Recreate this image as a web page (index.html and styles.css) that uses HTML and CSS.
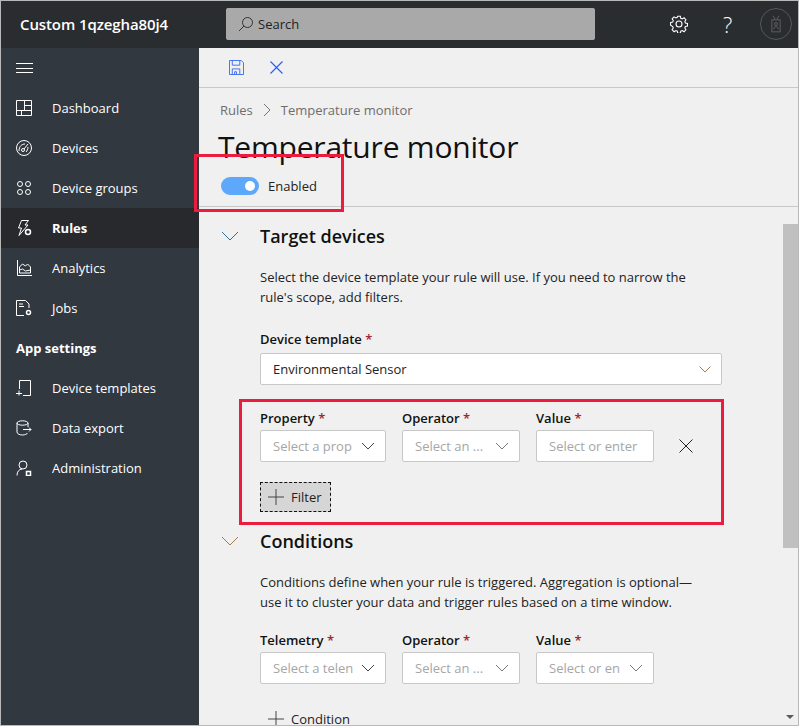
FILE: index.html
```html
<!DOCTYPE html>
<html lang="en">
<head>
    <meta charset="UTF-8">
    <title>Temperature monitor</title>
    <link rel="stylesheet" href="styles.css">
</head>
<body>
<div class="app">
    <header class="topbar">
        <div class="brand">Custom 1qzegha80j4</div>
        <div class="search">
            <svg class="search-icon" width="16" height="16" viewBox="0 0 16 16" fill="none" stroke="#333" stroke-width="1"><circle cx="9.500" cy="6.500" r="5"/><path d="M6 10 1 15"/></svg>
            <span>Search</span>
        </div>
        <div class="top-icons">
            <svg width="18" height="18" viewBox="0 0 18 18" fill="none" stroke="#fff" stroke-width="1.1"><path d="M7.600 1h2.800l.4 2.200 1.500.7 1.900-1.200 2 2-1.200 1.900.6 1.500 2.200.5v2.800l-2.200.4-.6 1.500 1.200 1.900-2 2-1.900-1.200-1.500.6-.4 2.200H7.600l-.4-2.200-1.500-.6-1.900 1.200-2-2 1.200-1.900-.6-1.500L.2 10.400V7.600l2.200-.5.6-1.500-1.200-1.900 2-2 1.900 1.200 1.500-.7z" transform="translate(.4 .2) scale(.96)"/><circle cx="9" cy="9" r="3"/></svg>
            <span class="help">?</span>
            <div class="avatar">
                <svg width="14" height="24" viewBox="0 0 14 24" fill="none" stroke="#6b6e71" stroke-width="1"><path d="M3 1l3 5M11 1 8 6"/><rect x="1.500" y="6.500" width="11" height="16"/><circle cx="7" cy="12" r="2"/><path d="M4 19c0-5 6-5 6 0"/></svg>
            </div>
        </div>
    </header>

    <div class="layout">
        <nav class="sidebar">
            <div class="nav-row">
                <svg class="nav-icon" width="17" height="16" viewBox="0 0 17 16" stroke="#fff" fill="none"><path d="M0 3.500h17M0 8.500h17M0 12.500h17"/></svg>
            </div>
            <a class="nav-row">
                <svg class="nav-icon" width="16" height="16" viewBox="0 0 16 16" stroke="#fff" fill="none"><path d="M.5.500h15v15H.5zM8.500.500v10M8.500 5.500h7M.5 10.500h15M5.500 10.500v5"/></svg>
                Dashboard
            </a>
            <a class="nav-row">
                <svg class="nav-icon" width="16" height="16" viewBox="0 0 16 16" stroke="#fff" fill="none"><circle cx="8" cy="8" r="7.500"/><circle cx="7" cy="10" r="1.500"/><path d="M3 11C3 6 6 4 9 4M8 9l4-5M12 7c0 2-1 4-2 5"/></svg>
                Devices
            </a>
            <a class="nav-row">
                <svg class="nav-icon" width="16" height="16" viewBox="0 0 16 16" stroke="#fff" fill="none"><circle cx="4" cy="4" r="2.500"/><circle cx="12" cy="4" r="2.500"/><circle cx="4" cy="12" r="2.500"/><circle cx="12" cy="12" r="2.500"/></svg>
                Device groups
            </a>
            <a class="nav-row active">
                <svg class="nav-icon" width="16" height="16" viewBox="0 0 16 16" stroke="#fff" fill="none"><path d="M5.500.500h7L9 5h3l-9 10.500L5.500 8H2.500z"/><circle cx="12" cy="12" r="2.500" stroke-width="1.500"/></svg>
                Rules
            </a>
            <a class="nav-row">
                <svg class="nav-icon" width="16" height="16" viewBox="0 0 16 16" stroke="#fff" fill="none"><path d="M1.500 0v15.500H16M3.500 7l3-3 3 2 2-2 3 3v6h-11zM3.500 10l3-1 3 2 5-1"/></svg>
                Analytics
            </a>
            <a class="nav-row">
                <svg class="nav-icon" width="16" height="16" viewBox="0 0 16 16" stroke="#fff" fill="none"><path d="M8 15.500H.5V.500h9l3.500 3.500v4M3 4h4M3 6.500h5"/><circle cx="12.500" cy="12.500" r="2" stroke-width="1.500"/></svg>
                Jobs
            </a>
            <div class="nav-row nav-title">App settings</div>
            <a class="nav-row">
                <svg class="nav-icon" width="16" height="16" viewBox="0 0 16 16" stroke="#fff" fill="none"><path d="M3.500 9V.500h11V15.500H7M0 13.500h6M3 10.500v5"/></svg>
                Device templates
            </a>
            <a class="nav-row">
                <svg class="nav-icon" width="16" height="16" viewBox="0 0 16 16" stroke="#fff" fill="none"><ellipse cx="6.500" cy="3" rx="5.500" ry="2.200"/><path d="M1 3v9c0 2 3 3 5.500 3s4.500-1 5-2M12 3v4M7 9.500h8M13 7.500l2 2-2 2"/></svg>
                Data export
            </a>
            <a class="nav-row">
                <svg class="nav-icon" width="16" height="16" viewBox="0 0 16 16" stroke="#fff" fill="none"><circle cx="7" cy="5" r="4"/><path d="M1 15.500c0-4 2-6 5-6.500"/><rect x="10.500" y="11.500" width="4" height="4" stroke-width="1.500"/></svg>
                Administration
            </a>
        </nav>

        <main class="main">
            <div class="toolbar">
                <svg width="15" height="15" viewBox="0 0 16 16" fill="none" stroke="#3a6cf0"><path d="M.5.500h12.500l2.500 2.500v12.500H.5zM3.500.500v5h8v-5M3.500 15.500v-6h8v6M6 15.500v-3h2v3"/></svg>
                <svg class="close-icon" width="13" height="13" viewBox="0 0 13 13" fill="none"><path d="M.5.500l12 12M12.500.500l-12 12"/></svg>
            </div>
            <div class="page-head">
                <div class="crumbs">
                    <span>Rules</span>
                    <svg width="8" height="14" viewBox="0 0 8 14" fill="none" stroke="#777"><path d="M1 1l6 6-6 6"/></svg>
                    <span>Temperature monitor</span>
                </div>
                <h1>Temperature monitor</h1>
                <div class="toggle-row">
                    <span class="toggle"><span class="knob"></span></span>
                    <span>Enabled</span>
                </div>
            </div>

            <div class="scroll">
                <div class="form">
                    <section class="panel">
                        <div class="panel-head">
                            <svg width="18" height="10" viewBox="0 0 18 10" fill="none" stroke="#2f6f9f"><path d="M1 1l8 8 8-8"/></svg>
                            <h2>Target devices</h2>
                        </div>
                        <p>Select the device template your rule will use. If you need to narrow the rule's scope, add filters.</p>
                        <label class="lbl top-lbl">Device template <em>*</em></label>
                        <div class="box wide">
                            <span class="value">Environmental Sensor</span>
                            <svg class="chev" width="12" height="7" viewBox="0 0 12 7" fill="none" stroke="#a67c52"><path d="M.5.500 6 6 11.500.500"/></svg>
                        </div>
                        <div class="filter-row">
                            <div class="field w126">
                                <label class="lbl">Property <em>*</em></label>
                                <div class="box"><span class="ph clip">Select a prop</span><svg class="chev dark" width="14" height="8" viewBox="0 0 14 8" fill="none" stroke="#444"><path d="M1 1l6 6 6-6"/></svg></div>
                            </div>
                            <div class="field w118">
                                <label class="lbl">Operator <em>*</em></label>
                                <div class="box"><span class="ph">Select an ...</span><svg class="chev" width="14" height="8" viewBox="0 0 14 8" fill="none" stroke="#777"><path d="M1 1l6 6 6-6"/></svg></div>
                            </div>
                            <div class="field w118">
                                <label class="lbl">Value <em>*</em></label>
                                <div class="box"><span class="ph">Select or enter</span></div>
                            </div>
                            <svg class="remove" width="14" height="14" viewBox="0 0 14 14" fill="none" stroke="#222"><path d="M.5.500l13 13M13.500.500l-13 13"/></svg>
                        </div>
                        <button class="add-btn focused">
                            <svg width="16" height="16" viewBox="0 0 16 16" stroke="#444"><path d="M0 8h16M8 0v16"/></svg>
                            Filter
                        </button>
                    </section>

                    <section class="panel">
                        <div class="panel-head">
                            <svg width="18" height="10" viewBox="0 0 18 10" fill="none" stroke="#a67c52"><path d="M1 1l8 8 8-8"/></svg>
                            <h2>Conditions</h2>
                        </div>
                        <p>Conditions define when your rule is triggered. Aggregation is optional— use it to cluster your data and trigger rules based on a time window.</p>
                        <div class="filter-row cond-row">
                            <div class="field w126">
                                <label class="lbl">Telemetry <em>*</em></label>
                                <div class="box"><span class="ph clip">Select a telen</span><svg class="chev dark" width="14" height="8" viewBox="0 0 14 8" fill="none" stroke="#444"><path d="M1 1l6 6 6-6"/></svg></div>
                            </div>
                            <div class="field w118">
                                <label class="lbl">Operator <em>*</em></label>
                                <div class="box"><span class="ph">Select an ...</span><svg class="chev" width="14" height="8" viewBox="0 0 14 8" fill="none" stroke="#777"><path d="M1 1l6 6 6-6"/></svg></div>
                            </div>
                            <div class="field w118">
                                <label class="lbl">Value <em>*</em></label>
                                <div class="box"><span class="ph clip">Select or en</span><svg class="chev" width="14" height="8" viewBox="0 0 14 8" fill="none" stroke="#777"><path d="M1 1l6 6 6-6"/></svg></div>
                            </div>
                        </div>
                        <button class="add-btn">
                            <svg width="16" height="16" viewBox="0 0 16 16" stroke="#444"><path d="M0 8h16M8 0v16"/></svg>
                            Condition
                        </button>
                    </section>
                </div>
                <div class="scrollbar">
                    <div class="thumb"></div>
                    <span class="arrow"></span>
                </div>
            </div>
        </main>
    </div>

    <!-- red callouts drawn on top of the screenshot -->
    <div class="callout callout-toggle"></div>
    <div class="callout callout-filter"></div>
</div>
</body>
</html>
```

FILE: styles.css
```css
* {
    box-sizing: border-box;
}

body {
    margin: 0;
    font-family: "Open Sans", "Noto Sans", sans-serif;
    font-size: 13px;
    color: #222;
    background-color: #f0f0f0;
}

.app {
    position: relative;
    width: 799px;
    height: 726px;
    border: 1px solid #b8b8b8;
    display: flex;
    flex-direction: column;
    overflow: hidden;
}

.topbar {
    height: 47px;
    flex: none;
    display: flex;
    align-items: center;
    padding-bottom: 1px;
    background-color: #2a2d30;
}

.brand {
    width: 225px;
    padding-left: 19px;
    color: white;
    font-size: 15px;
    font-weight: 600;
    letter-spacing: -0.1px;
}

.search {
    width: 369px;
    height: 32px;
    display: flex;
    align-items: center;
    gap: 4px;
    padding-left: 12px;
    border-radius: 2px;
    background-color: #a9a9a9;
    color: #222;
}

.top-icons {
    flex: 1;
    display: flex;
    align-items: center;
    padding-left: 75px;
}

.help {
    margin-left: 35px;
    color: white;
    font-size: 22px;
    font-weight: 300;
}

.avatar {
    margin-left: 28px;
    width: 32px;
    height: 32px;
    border: 1px solid #55585b;
    border-radius: 50%;
    display: flex;
    align-items: center;
    justify-content: center;
}

.avatar svg {
    transform: scale(.75);
}

.layout {
    flex: 1;
    display: flex;
    min-height: 0;
}

.sidebar {
    width: 198px;
    flex: none;
    background-color: #323840;
    color: white;
}

.nav-row {
    height: 40px;
    display: flex;
    align-items: center;
    padding-left: 15px;
}

.nav-icon {
    flex: none;
    margin-right: 20px;
}

.nav-title,
.active {
    font-weight: 700;
}

.active {
    background-color: #27292c;
}

.main {
    flex: 1;
    min-width: 0;
    display: flex;
    flex-direction: column;
}

.toolbar {
    height: 40px;
    flex: none;
    display: flex;
    align-items: center;
    gap: 26px;
    padding-left: 30px;
    border-bottom: 1px solid #c8c8c8;
}

.close-icon {
    stroke: #1f5cff;
    stroke-width: 1.1;
}

.page-head {
    height: 119px;
    flex: none;
    padding: 12px 0 0 21px;
    border-bottom: 1px solid #c8c8c8;
}

.crumbs {
    display: flex;
    align-items: center;
    gap: 10px;
    color: #6e6e6e;
    line-height: 20px;
}

h1 {
    margin: 7px 0 0 -2px;
    font-size: 30px;
    font-weight: 400;
    line-height: 40px;
    letter-spacing: -0.2px;
    color: #111;
}

.toggle-row {
    margin-top: 10px;
    margin-left: 1px;
    display: flex;
    align-items: center;
    gap: 9px;
}

.toggle {
    width: 38px;
    height: 18px;
    border-radius: 9px;
    background-color: #5ea8fb;
    display: flex;
    align-items: center;
    justify-content: flex-end;
    padding-right: 4px;
}

.knob {
    width: 10px;
    height: 10px;
    border-radius: 50%;
    background-color: white;
}

.scroll {
    flex: 1;
    min-height: 0;
    display: flex;
    overflow: hidden;
}

.form {
    flex: 1;
    min-width: 0;
    padding: 15px 0 0 22px;
}

.panel-head {
    height: 28px;
    display: flex;
    align-items: center;
    gap: 21px;
}

h2 {
    margin: 0;
    font-size: 18px;
    font-weight: 600;
    color: #111;
}

p {
    width: 450px;
    margin: 17px 0 0 39px;
    line-height: 20px;
    color: #222;
}

.lbl {
    display: block;
    font-weight: 600;
    line-height: 18px;
    color: #111;
}

.lbl em {
    font-style: normal;
    color: #a4262c;
}

.top-lbl {
    margin: 23px 0 5px 39px;
}

.box {
    height: 32px;
    display: flex;
    align-items: center;
    justify-content: space-between;
    padding: 0 10px 0 12px;
    border: 1px solid #c8c8c8;
    border-radius: 2px;
    background-color: white;
}

.wide {
    width: 462px;
    margin-left: 39px;
}

.value {
    color: #222;
}

.ph {
    color: #a6a6a6;
    white-space: nowrap;
}

.clip {
    width: 82px;
    overflow: hidden;
}

.chev {
    flex: none;
}

.filter-row {
    margin: 24px 0 0 39px;
    display: flex;
    align-items: flex-start;
    gap: 16px;
}

.cond-row {
    margin-top: 19px;
}

.field .lbl {
    margin-bottom: 3px;
}

.w126 {
    width: 126px;
}

.w118 {
    width: 118px;
}

.remove {
    margin: 30px 0 0 9px;
}

.add-btn {
    margin: 20px 0 0 39px;
    height: 30px;
    width: 71px;
    display: flex;
    align-items: center;
    gap: 7px;
    padding: 0 0 0 7px;
    border: 1px solid transparent;
    background: none;
    font: inherit;
    color: #222;
}

.focused {
    border: 1px dashed #111;
    background-color: #d6d6d6;
}

.add-btn:not(.focused) {
    width: auto;
}

.panel + .panel {
    margin-top: 15px;
}

.scrollbar {
    width: 15px;
    flex: none;
    position: relative;
    padding-top: 17px;
}

.thumb {
    height: 324px;
    background-color: #c0c0c0;
}

.arrow {
    position: absolute;
    left: 3px;
    bottom: 6px;
    border-left: 4px solid transparent;
    border-right: 4px solid transparent;
    border-top: 4px solid #5a5a5a;
}

.callout {
    position: absolute;
    border: 3px solid #ec1c3f;
}

.callout-toggle {
    left: 193px;
    top: 153px;
    width: 150px;
    height: 58px;
}

.callout-filter {
    left: 238px;
    top: 398px;
    width: 485px;
    height: 126px;
}
```
